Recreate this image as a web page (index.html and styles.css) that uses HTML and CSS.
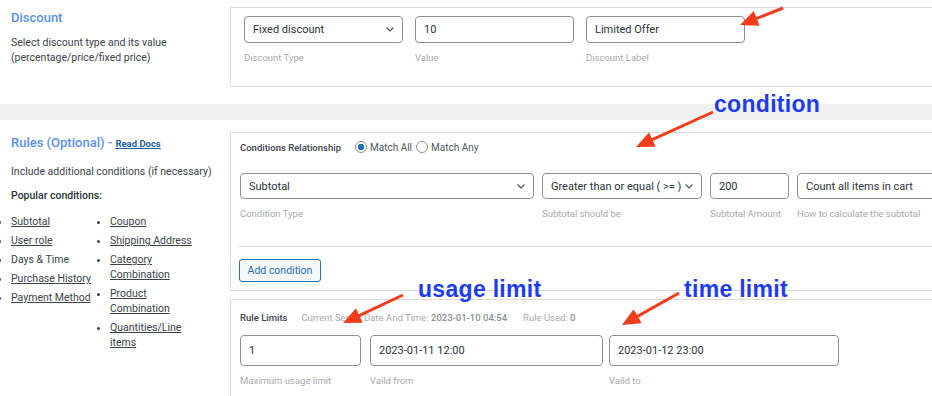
FILE: index.html
```html
<!doctype html>
<html lang="en">
	<head>
		<meta charset="UTF-8" />
		<meta name="viewport" content="width=device-width, initial-scale=1.0" />
		<title>Discount rule</title>
		<link rel="stylesheet" href="styles.css">
	</head>
	<body>
		<section class="section section-discount">
			<div class="section-info">
				<h2 class="section-title">Discount</h2>
				<p class="section-desc">Select discount type and its value<br />(percentage/price/fixed price)</p>
			</div>
			<div class="section-body">
				<div class="panel panel-discount">
					<div class="field-row gap-12">
						<div class="field w-159">
							<div class="control select">
								<span>Fixed discount</span>
								<svg class="chevron" width="8" height="5" viewBox="0 0 8 5"><polyline points="0.5,0.5 4,4 7.5,0.5" /></svg>
							</div>
							<span class="hint">Discount Type</span>
						</div>
						<div class="field w-159">
							<input class="control" type="text" value="10" />
							<span class="hint">Value</span>
						</div>
						<div class="field w-159">
							<input class="control" type="text" value="Limited Offer" />
							<span class="hint">Discount Label</span>
						</div>
					</div>
				</div>
			</div>
		</section>

		<div class="band"></div>

		<section class="section section-rules">
			<div class="section-info">
				<h2 class="section-title">
					Rules (Optional) -
					<a href="#" class="read-docs">Read Docs</a>
				</h2>
				<p class="section-desc mt-10">Include additional conditions (if necessary)</p>
				<p class="section-desc popular">Popular conditions:</p>
				<div class="conditions-list">
					<ul>
						<li><a href="#">Subtotal</a></li>
						<li><a href="#">User role</a></li>
						<li>Days &amp; Time</li>
						<li><a href="#">Purchase History</a></li>
						<li><a href="#">Payment Method</a></li>
					</ul>
					<ul class="col-2">
						<li><a href="#">Coupon</a></li>
						<li><a href="#">Shipping Address</a></li>
						<li><a href="#">Category Combination</a></li>
						<li><a href="#">Product Combination</a></li>
						<li><a href="#">Quantities/Line items</a></li>
					</ul>
				</div>
			</div>

			<div class="section-body">
				<div class="panel panel-conditions">
					<div class="relationship">
						<span class="strong-label">Conditions Relationship</span>
						<label class="radio"><input type="radio" name="rel" checked /> Match All</label>
						<label class="radio"><input type="radio" name="rel" /> Match Any</label>
					</div>

					<div class="field-row gap-8 mt-18">
						<div class="field w-294">
							<div class="control select h-26">
								<span>Subtotal</span>
								<svg class="chevron" width="8" height="5" viewBox="0 0 8 5"><polyline points="0.5,0.5 4,4 7.5,0.5" /></svg>
							</div>
							<span class="hint">Condition Type</span>
						</div>
						<div class="field w-160">
							<div class="control select h-26">
								<span>Greater than or equal ( &gt;= )</span>
								<svg class="chevron" width="8" height="5" viewBox="0 0 8 5"><polyline points="0.5,0.5 4,4 7.5,0.5" /></svg>
							</div>
							<span class="hint">Subtotal should be</span>
						</div>
						<div class="field w-79">
							<input class="control h-26" type="text" value="200" />
							<span class="hint">Subtotal Amount</span>
						</div>
						<div class="field w-160">
							<div class="control select h-26">
								<span>Count all items in cart</span>
							</div>
							<span class="hint">How to calculate the subtotal</span>
						</div>
					</div>

					<hr class="divider" />

					<button class="button" type="button">Add condition</button>
				</div>

				<div class="panel panel-limits">
					<div class="limits-head">
						<span class="strong-label">Rule Limits</span>
						<span class="meta">Current Server Date And Time: <b>2023-01-10 04:54</b></span>
						<span class="meta">Rule Used: <b>0</b></span>
					</div>

					<div class="field-row mt-10">
						<div class="field w-121">
							<input class="control h-31" type="text" value="1" />
							<span class="hint">Maximum usage limit</span>
						</div>
						<div class="field w-233 ml-9">
							<input class="control h-31" type="text" value="2023-01-11 12:00" />
							<span class="hint">Vaild from</span>
						</div>
						<div class="field w-230 ml-6">
							<input class="control h-31" type="text" value="2023-01-12 23:00" />
							<span class="hint">Vaild to</span>
						</div>
					</div>
				</div>
			</div>
		</section>

		<!-- annotations drawn over the screenshot -->
		<span class="note note-condition">condition</span>
		<span class="note note-usage">usage limit</span>
		<span class="note note-time">time limit</span>

		<svg class="arrows" width="932" height="396" viewBox="0 0 932 396">
			<defs>
				<marker id="head" markerUnits="userSpaceOnUse" markerWidth="18" markerHeight="16" refX="8" refY="8" orient="auto">
					<path d="M0,0 L18,8 L0,16 z" fill="#f23c1b" />
				</marker>
			</defs>
			<line x1="783" y1="8" x2="749.3" y2="21.3" marker-end="url(#head)" />
			<line x1="713" y1="112" x2="645.1" y2="142.9" marker-end="url(#head)" />
			<line x1="403" y1="295" x2="352.1" y2="318.8" marker-end="url(#head)" />
			<line x1="679" y1="293" x2="630.7" y2="320.1" marker-end="url(#head)" />
		</svg>
	</body>
</html>
```

FILE: styles.css
```css
:root {
	--color-text: #3c434a;
	--color-input: #2c3338;
	--color-hint: #a7aaad;
	--color-meta: #8c8f94;
	--color-border: #dcdcde;
	--color-field: #8c8f94;
	--color-band: #f0f0f0;
	--color-title: #5b8fe6;
	--color-link: #2271b1;
	--color-note: #1d3cf2;
	--color-arrow: #f23c1b;
}

html {
	overflow: hidden;
}

body {
	position: relative;
	margin: 0;
	width: 1000px;
	height: 396px;

	background: #ffffff;
	color: var(--color-text);

	font-family: Roboto, 'Liberation Sans', sans-serif;
	font-size: 10.5px;
	line-height: 15px;
}

p {
	margin: 0;
}

a {
	color: inherit;
}

/* Layout */

.section {
	display: flex;
}

.section-info {
	width: 230px;
	flex-shrink: 0;
	box-sizing: border-box;
	padding-left: 11px;
}

.section-body {
	flex: 1;
}

.section-discount {
	padding-top: 7px;
}

.section-discount .section-info {
	padding-top: 1px;
}

.section-rules .section-info {
	padding-top: 1px;
}

.section-title {
	margin: 0 0 7px;
	font-size: 13px;
	line-height: 20px;
	font-weight: 500;
	color: var(--color-title);
}

.read-docs {
	font-size: 9.5px;
	font-weight: 700;
	color: #1f5fa6;
	text-underline-offset: 1px;
}

.section-desc {
	font-size: 10.5px;
	line-height: 15px;
}

.popular {
	margin-top: 9px;
	font-weight: 500;
	color: #2c3338;
}

.band {
	height: 16px;
	margin: 17px 0 12px;
	background: var(--color-band);
}

.conditions-list {
	display: flex;
	margin: 11px 0 0 -11px;
}

.conditions-list ul {
	width: 99px;
	box-sizing: border-box;
	margin: 0;
	padding-left: 11px;
}

.conditions-list .col-2 {
	width: 102px;
}

.conditions-list li {
	margin-bottom: 4px;
}

.conditions-list a {
	text-underline-offset: 1px;
}

/* Panels */

.panel {
	border: 1px solid var(--color-border);
}

.panel-discount {
	box-sizing: border-box;
	height: 80px;
	padding: 8px 13px 0;
}

.panel-conditions {
	padding: 6px 0 8px 9px;
}

.panel-limits {
	margin-top: 8px;
	padding: 9px 0 20px 9px;
}

.relationship {
	display: flex;
	align-items: center;
	height: 16px;
	gap: 4px;
}

.strong-label {
	margin-right: 10px;
	font-size: 9.5px;
	font-weight: 500;
	color: var(--color-text);
}

.radio {
	display: flex;
	align-items: center;
	gap: 3px;
	font-size: 10px;
	color: #50575e;
}

.radio input {
	appearance: none;
	box-sizing: border-box;
	width: 12px;
	height: 12px;
	margin: 0;
	border: 1px solid var(--color-field);
	border-radius: 50%;
	background: #ffffff;
}

.radio input:checked {
	background: radial-gradient(circle, var(--color-link) 0 3px, #ffffff 3.5px);
}

.limits-head {
	display: flex;
	align-items: center;
	height: 16px;
}

.limits-head .strong-label {
	margin-right: 14px;
}

.meta {
	margin-right: 16px;
	font-size: 9.5px;
	color: var(--color-hint);
}

.meta b {
	font-weight: 500;
	color: var(--color-meta);
}

.divider {
	height: 1px;
	margin: 26px 0 12px -1px;
	border: none;
	background: var(--color-border);
}

.button {
	width: 82px;
	height: 23px;
	margin-left: -1px;
	padding: 0;

	border: 1px solid var(--color-link);
	border-radius: 3px;
	background: #f6f7f7;
	color: var(--color-link);

	font-family: inherit;
	font-size: 10.5px;
}

/* Fields */

.field-row {
	display: flex;
}

.field {
	display: flex;
	flex-direction: column;
	flex-shrink: 0;
}

.control {
	box-sizing: border-box;
	width: 100%;
	height: 27px;
	margin: 0;
	padding: 0 8px;

	border: 1px solid var(--color-field);
	border-radius: 4px;
	background: #ffffff;
	color: var(--color-input);

	font-family: inherit;
	font-size: 11px;
	outline: none;
}

.select {
	display: flex;
	align-items: center;
	justify-content: space-between;
	white-space: nowrap;
	overflow: hidden;
}

.chevron {
	flex-shrink: 0;
	margin-left: 4px;
	fill: none;
	stroke: #50575e;
	stroke-width: 1.2;
}

.hint {
	margin-top: 9px;
	font-size: 9.5px;
	line-height: 12px;
	color: var(--color-hint);
	white-space: nowrap;
}

/* Annotations */

.note {
	position: absolute;
	font-family: 'Liberation Sans', Arial, sans-serif;
	font-size: 23px;
	line-height: 24px;
	font-weight: 700;
	letter-spacing: 0.3px;
	color: var(--color-note);
	white-space: nowrap;
}

.note-condition {
	left: 714px;
	top: 92px;
}

.note-usage {
	left: 418px;
	top: 277px;
}

.note-time {
	left: 684px;
	top: 277px;
}

.arrows {
	position: absolute;
	top: 0;
	left: 0;
	pointer-events: none;
}

.arrows line {
	stroke: var(--color-arrow);
	stroke-width: 3;
}

/* Utils */

.gap-8 {
	gap: 8px;
}

.gap-12 {
	gap: 12px;
}

.mt-10 {
	margin-top: 10px;
}

.mt-18 {
	margin-top: 18px;
}

.ml-6 {
	margin-left: 6px;
}

.ml-9 {
	margin-left: 9px;
}

.w-79 {
	width: 79px;
}

.w-121 {
	width: 121px;
}

.w-159 {
	width: 159px;
}

.w-160 {
	width: 160px;
}

.w-230 {
	width: 230px;
}

.w-233 {
	width: 233px;
}

.w-294 {
	width: 294px;
}

.h-26 {
	height: 26px;
}

.h-31 {
	height: 31px;
}
```
